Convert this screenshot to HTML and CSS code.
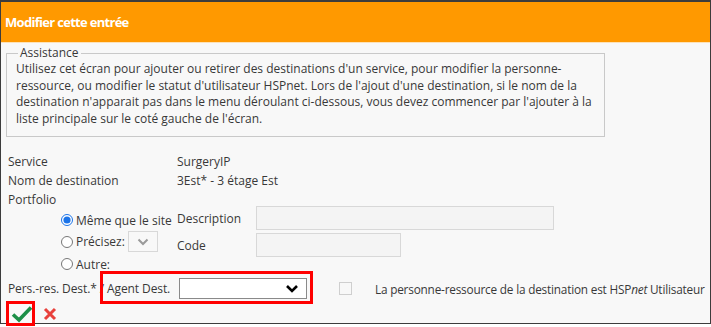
FILE: index.html
```html
<!DOCTYPE html>
<html lang="fr">
	<head>
		<meta charset="utf-8" />
		<link rel="stylesheet" href="styles.css">
		<title>Modifier cette entrée</title>
	</head>
	<body>
		<div class="page">
			<div class="panel">
				<div class="hd">
					<h1>Modifier cette entrée</h1>
				</div>
				<div class="bd">
					<fieldset class="help">
						<legend>Assistance</legend>
						<p>Utilisez cet écran pour ajouter ou retirer des destinations d'un service, pour modifier la personne-<br />ressource, ou modifier le statut d'utilisateur HSPnet. Lors de l'ajout d'une destination, si le nom de la<br />destination n'apparait pas dans le menu déroulant ci-dessous, vous devez commencer par l'ajouter à la<br />liste principale sur le coté gauche de l'écran.</p>
					</fieldset>

					<div class="info">
						<div class="row"><span class="lbl">Service</span><span>SurgeryIP</span></div>
						<div class="row"><span class="lbl">Nom de destination</span><span>3Est* - 3 étage Est</span></div>
						<div class="row"><span class="lbl">Portfolio</span></div>
					</div>

					<div class="portfolio">
						<div class="radios">
							<label class="radio r1"><input type="radio" name="pf" checked /> Même que le site</label>
							<label class="radio r2"><input type="radio" name="pf" /> Précisez:
								<span class="mini-select">
									<svg width="12" height="8" viewBox="0 0 12 8"><path d="M1.5 1.5 L6 6 L10.5 1.5" fill="none" stroke="#9a9a9a" stroke-width="2"/></svg>
								</span>
							</label>
							<label class="radio r3"><input type="radio" name="pf" /> Autre:</label>
						</div>
						<div class="fields">
							<div class="field f1"><span class="flbl">Description</span><span class="box wide"></span></div>
							<div class="field f2"><span class="flbl">Code</span><span class="box short"></span></div>
						</div>
					</div>

					<div class="contact">
						<span class="clbl">Pers.-res. Dest.* / Agent Dest.</span>
						<span class="select">
							<svg width="14" height="10" viewBox="0 0 14 10"><path d="M2 2 L7 7 L12 2" fill="none" stroke="#000" stroke-width="2.6"/></svg>
						</span>
						<span class="check"></span>
						<span class="note">La personne-ressource de la destination est HSP<em>net</em> Utilisateur</span>
					</div>

					<div class="actions">
						<svg class="ok" width="22" height="18" viewBox="0 0 22 18"><path d="M2 9.5 L8 15 L20 2.5" fill="none" stroke="#1c8f47" stroke-width="3.6"/></svg>
						<svg class="cancel" width="14" height="14" viewBox="0 0 14 14"><path d="M2 2 L12 12 M12 2 L2 12" fill="none" stroke="#e8413c" stroke-width="3"/></svg>
					</div>
				</div>
			</div>

			<div class="mark mark-agent"></div>
			<div class="mark mark-ok"></div>
		</div>
	</body>
</html>
```

FILE: styles.css
```css
body,html{
	margin:0;
	padding:0;
	background-color:#fff;
	font-family:"Open Sans", "Liberation Sans", sans-serif;
	font-size:12px;
	color:#383838;
}
h1,p,fieldset,legend{
	margin:0;
	padding:0;
}
.page{
	position:relative;
	height:327px;
	overflow:hidden;
}
.panel{
	width:709px;
	height:321px;
	border:1px solid #3c3c3c;
	border-top-width:2px;
	background-color:#f8f8f8;
}
.hd{
	height:40px;
	background-color:#ff9900;
	border-bottom:1px solid #fde2b8;
	display:flex;
	align-items:center;
}
.hd h1{
	font-size:13px;
	font-weight:bold;
	color:#fff;
	padding-left:4px;
	letter-spacing:-0.7px;
}
.bd{
	padding:0 0 0 7px;
}
.help{
	margin:3px 0 0 -2px;
	width:579px;
	border:1px solid #c9c9c9;
	padding:0 9px 8px;
}
.help legend{
	padding:0 2px;
	margin-left:2px;
	font-size:12px;
	line-height:14px;
}
.help p{
	line-height:16.7px;
	margin-top:1px;
}
.info{
	margin-top:15px;
}
.row{
	display:flex;
	height:19px;
	align-items:center;
}
.lbl{
	width:169px;
}
.portfolio{
	display:flex;
	padding-left:53px;
}
.radios{
	width:116px;
	flex-shrink:0;
	display:flex;
	flex-direction:column;
}
.radio{
	display:flex;
	align-items:center;
	white-space:nowrap;
}
.radio input{
	margin:0 3px 0 0;
	width:12px;
	height:12px;
	accent-color:#1a73e8;
}
.r1{ height:21px; margin-top:1px; }
.r2{ height:22px; }
.r3{ height:23px; }
.mini-select{
	display:inline-flex;
	align-items:center;
	justify-content:center;
	width:28px;
	height:19px;
	margin-left:3px;
	border:1px solid #d8d8d8;
	background-color:#f8f8f8;
}
.fields{
	display:flex;
	flex-direction:column;
	margin-top:-3px;
}
.field{
	display:flex;
	align-items:center;
}
.f1{ height:25px; }
.f2{ height:29px; }
.flbl{
	width:79px;
	flex-shrink:0;
}
.box{
	height:24px;
	border:1px solid #d8d8d8;
	background-color:#f4f4f4;
	box-sizing:border-box;
}
.wide{ width:298px; }
.short{ width:145px; }
.contact{
	display:flex;
	align-items:center;
	height:24px;
	margin-top:1px;
}
.contact > span{
	flex-shrink:0;
}
.clbl{
	width:171px;
	white-space:nowrap;
	letter-spacing:-0.1px;
}
.select{
	display:flex;
	align-items:center;
	justify-content:flex-end;
	width:128px;
	height:21px;
	border:1px solid #8a8a8a;
	background-color:#fff;
	padding-right:7px;
	box-sizing:border-box;
}
.check{
	width:11px;
	height:11px;
	border:1px solid #cfcfcf;
	background-color:#f8f8f8;
	margin-left:32px;
}
.note{
	margin-left:23px;
	white-space:nowrap;
	font-size:11.8px;
	letter-spacing:-0.2px;
}
.actions{
	display:flex;
	align-items:center;
	gap:10px;
	margin-top:4px;
	padding-left:3px;
}
.mark{
	position:absolute;
	border:3px solid #f00;
}
.mark-agent{
	left:100px;
	top:271px;
	width:207px;
	height:27px;
}
.mark-ok{
	left:6px;
	top:301px;
	width:23px;
	height:19px;
}
```
